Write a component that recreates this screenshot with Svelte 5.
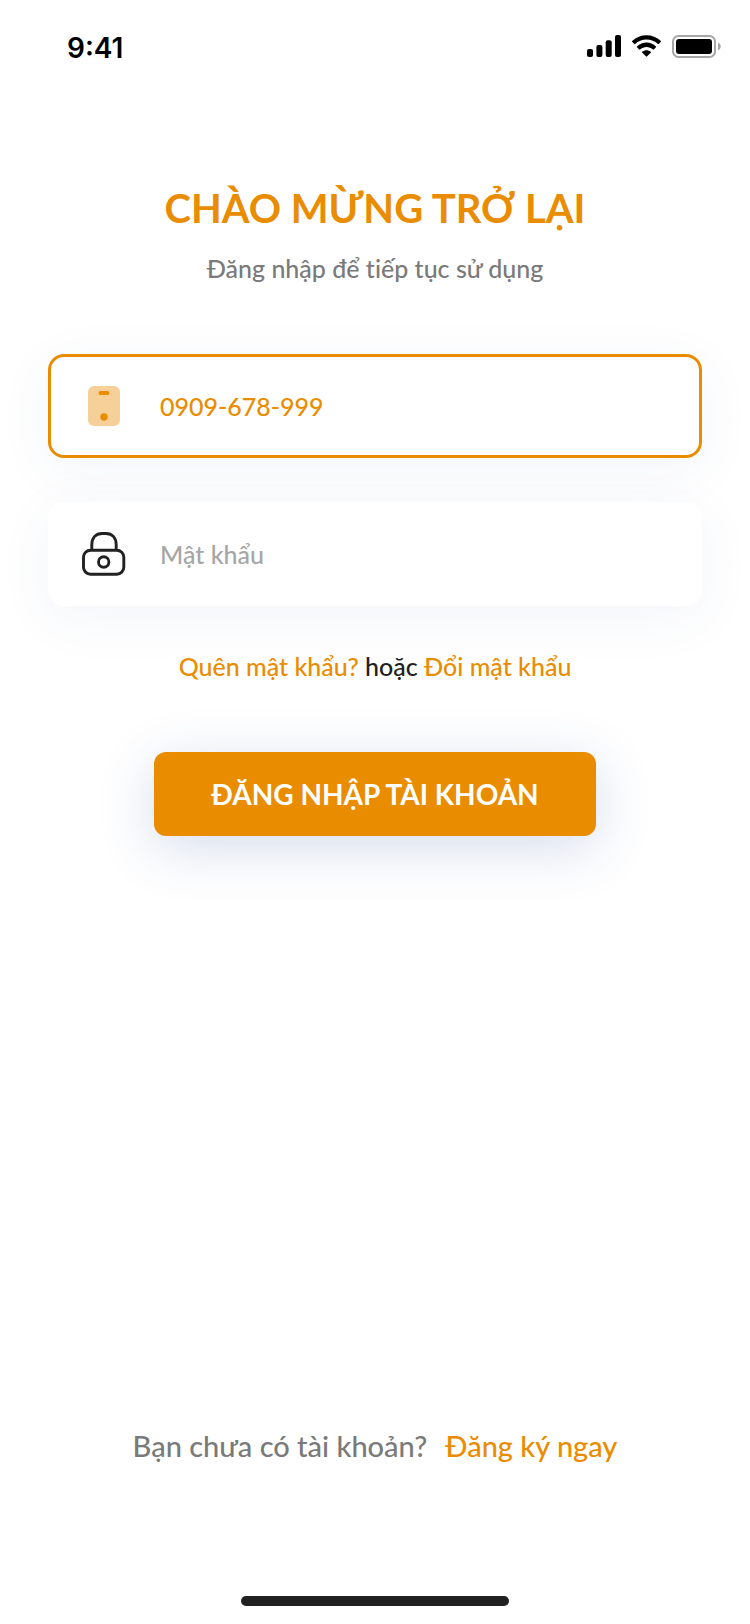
<script>
  let phone = $state('0909-678-999');
  let password = $state('');
</script>

<div class="screen">
  <header class="status">
    <time>9:41</time>
    <div class="indicators">
      <svg width="34" height="22" viewBox="0 0 34 22" aria-hidden="true">
        <rect x="0" y="14" width="6" height="8" rx="2" />
        <rect x="9.4" y="10" width="6" height="12" rx="2" />
        <rect x="18.7" y="5.2" width="6" height="16.8" rx="2" />
        <rect x="28" y="0" width="6" height="22" rx="2" />
      </svg>
      <svg width="31" height="22" viewBox="0 0 31 22" aria-hidden="true">
        <path d="M15.5 4.5C19.9 4.500 23.900 6.200 26.900 9.000C27.100 9.200 27.500 9.200 27.700 9.000L29.900 6.800C30.100 6.600 30.100 6.200 29.900 6.000C21.900-1.700 9.100-1.700 1.100 6.000C.9 6.200 .9 6.600 1.100 6.800L3.300 9.000C3.500 9.200 3.900 9.200 4.100 9.000C7.100 6.200 11.100 4.500 15.500 4.500Z" />
        <path d="M15.500 11.900C17.900 11.900 20.200 12.800 22.000 14.400C22.200 14.600 22.600 14.600 22.800 14.400L25.000 12.200C25.200 12.000 25.200 11.600 25.000 11.400C19.600 6.300 11.400 6.300 6.000 11.400C5.800 11.600 5.800 12.000 6.000 12.200L8.200 14.400C8.400 14.600 8.800 14.600 9.000 14.400C10.800 12.800 13.100 11.900 15.500 11.900Z" />
        <path d="M19.900 16.700C20.100 16.900 20.100 17.300 19.900 17.500L15.900 21.500C15.700 21.700 15.300 21.700 15.100 21.500L11.100 17.500C10.900 17.300 10.900 16.900 11.100 16.700C13.600 14.600 17.400 14.600 19.900 16.700Z" />
      </svg>
      <svg width="49" height="23" viewBox="0 0 49 23" aria-hidden="true">
        <rect x="1" y="1" width="42" height="21" rx="5.500" fill="none" stroke="#a6a6a6" stroke-width="2" />
        <rect x="4" y="4" width="36" height="15" rx="3" />
        <path d="M46 7.500V15.500C47.600 14.800 48.700 13.300 48.700 11.500C48.700 9.700 47.600 8.200 46 7.500Z" fill="#a6a6a6" />
      </svg>
    </div>
  </header>

  <main>
    <h1>CHÀO MỪNG TRỞ LẠI</h1>
    <p class="subtitle">Đăng nhập để tiếp tục sử dụng</p>

    <form onsubmit={(e) => e.preventDefault()}>
      <label class="field active">
        <svg width="48" height="48" viewBox="0 0 48 48" aria-hidden="true">
          <rect x="8" y="4" width="32" height="40" rx="6" fill="#f7d099" />
          <rect x="18.500" y="9" width="11" height="4" rx="2" fill="#ea8c00" />
          <circle cx="24" cy="35" r="3.700" fill="#ea8c00" />
        </svg>
        <input type="tel" aria-label="Số điện thoại" bind:value={phone} />
      </label>
      <label class="field">
        <svg width="48" height="48" viewBox="0 0 48 48" aria-hidden="true" fill="none" stroke="#212121" stroke-width="2.900">
          <path d="M11.800 20.200V15C11.800 7.500 16 3.500 22 3.500H26C32 3.500 36.200 7.500 36.200 15V20.200" />
          <rect x="3.500" y="20.200" width="40.300" height="24" rx="7" />
          <circle cx="23.700" cy="32" r="5.200" />
        </svg>
        <input type="password" aria-label="Mật khẩu" placeholder="Mật khẩu" bind:value={password} />
      </label>

      <p class="links">
        <a href="#forgot">Quên mật khẩu?</a> hoặc <a href="#change">Đổi mật khẩu</a>
      </p>

      <button type="submit">ĐĂNG NHẬP TÀI KHOẢN</button>
    </form>
  </main>

  <footer>
    <span>Bạn chưa có tài khoản?</span>
    <a href="#register">Đăng ký ngay</a>
  </footer>

  <div class="home-bar"></div>
</div>

<style>
  :global(body) {
    margin: 0;
    background: #fff;
  }

  .screen {
    display: flex;
    flex-direction: column;
    min-height: 100vh;
    box-sizing: border-box;
    font-family: Lato, 'Open Sans', sans-serif;
    font-size: 25px;
    line-height: 32px;
    font-weight: 500;
    font-variant-ligatures: none;
    color: #212121;
  }

  .status {
    display: flex;
    justify-content: space-between;
    align-items: center;
    padding: 28px 29px 28px 67px;
  }

  time {
    font: 600 28px/40px Inter, sans-serif;
    color: #000;
  }

  .indicators {
    display: flex;
    align-items: center;
    gap: 10px;
    padding-bottom: 4px;
  }

  .indicators svg {
    display: block;
  }

  main {
    padding: 84px 48px 0;
    text-align: center;
  }

  h1 {
    margin: 0;
    font-size: 40px;
    line-height: 56px;
    font-weight: 700;
    color: #ea8c00;
  }

  p {
    margin: 0;
  }

  .subtitle {
    margin-top: 16px;
    color: #7a7a7a;
  }

  form {
    display: flex;
    flex-direction: column;
    align-items: center;
    margin-top: 70px;
  }

  .field {
    display: flex;
    align-items: center;
    gap: 32px;
    align-self: stretch;
    height: 104px;
    margin-bottom: 44px;
    padding: 0 32px;
    box-sizing: border-box;
    border-radius: 16px;
    background: #fff;
    box-shadow: 0 12px 56px rgba(44, 84, 160, 0.06);
  }

  .active {
    padding: 0 29px;
    border: 3px solid #ea8c00;
  }

  .field svg {
    flex: none;
  }

  input {
    flex: 1;
    min-width: 0;
    padding: 0;
    border: 0;
    outline: 0;
    background: none;
    font: inherit;
    color: #ea8c00;
  }

  input::placeholder {
    color: #a6a6a6;
    opacity: 1;
  }

  a {
    color: #ea8c00;
    text-decoration: none;
  }

  button {
    width: 442px;
    max-width: 100%;
    height: 84px;
    margin-top: 70px;
    border: 0;
    border-radius: 12px;
    background: #ea8c00;
    box-shadow: 0 12px 56px rgba(44, 84, 160, 0.2);
    font: inherit;
    font-size: 28px;
    font-weight: 700;
    color: #fff;
  }

  footer {
    display: flex;
    justify-content: center;
    gap: 18px;
    margin-top: auto;
    padding-bottom: 134px;
    font-size: 29px;
    color: #7a7a7a;
  }

  .home-bar {
    align-self: center;
    width: 268px;
    height: 10px;
    margin-bottom: 18px;
    border-radius: 5px;
    background: #212121;
  }
</style>
